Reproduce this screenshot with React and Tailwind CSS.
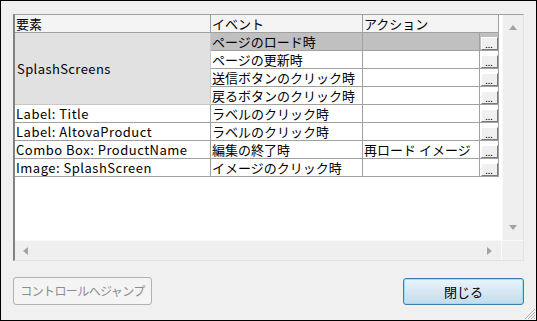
import React from "react";

const FONT = { fontFamily: '"Noto Sans CJK JP", "Liberation Sans", sans-serif' };

const ROWS = [
    { event: "ページのロード時", action: "", selected: true },
    { event: "ページの更新時", action: "" },
    { event: "送信ボタンのクリック時", action: "" },
    { event: "戻るボタンのクリック時", action: "" },
];

const SINGLE = [
    { element: "Label: Title", event: "ラベルのクリック時", action: "" },
    { element: "Label: AltovaProduct", event: "ラベルのクリック時", action: "" },
    { element: "Combo Box: ProductName", event: "編集の終了時", action: "再ロード イメージ" },
    { element: "Image: SplashScreen", event: "イメージのクリック時", action: "" },
];

const cell = "border-r border-b border-[#a0a0a0] px-[1px] text-[13px] leading-[17px] text-black whitespace-nowrap overflow-hidden";

const DotsCell = ({ selected }) => (
    <div className={"flex items-end justify-center border-b border-r border-[#a0a0a0] " + (selected ? "bg-[#c0c0c0]" : "bg-white")}>
        <div className="flex h-[13px] w-[17px] items-end justify-center border border-l-white border-t-white border-r-[#7a7a7a] border-b-[#7a7a7a] bg-[#f0f0f0] text-[9px] leading-[9px] text-black">
            ...
        </div>
    </div>
);

const Tri = ({ dir }) => {
    const pts = {
        up: "0,5 4,0 8,5",
        down: "0,0 8,0 4,5",
        left: "5,0 5,8 0,4",
        right: "0,0 0,8 5,4",
    }[dir];
    const w = dir === "up" || dir === "down" ? 8 : 5;
    const h = dir === "up" || dir === "down" ? 5 : 8;
    return (
        <svg width={w} height={h}>
            <polygon points={pts} fill="#a3a3a3" />
        </svg>
    );
};

export default function App() {
    return (
        <div
            className="relative flex h-[321px] w-[537px] flex-col border border-black bg-[#f0f0f0] pl-[12px] pr-[12px] pt-[13px]"
            style={FONT}
        >
            {/* list */}
            <div className="flex h-[247px] w-[511px] flex-col border-l-2 border-t border-r border-b border-l-[#828282] border-t-[#a0a0a0] border-r-[#e3e3e3] border-b-[#e3e3e3] bg-white">
                <div className="flex h-[225px]">
                    <div className="w-[484px]">
                        <div className="grid grid-cols-[196px_152px_117px_19px] auto-rows-[18px]">
                            <div className={cell + " bg-[#f4f4f4]"}>要素</div>
                            <div className={cell + " bg-[#f4f4f4]"}>イベント</div>
                            <div className={cell + " col-span-2 bg-[#f4f4f4]"}>アクション</div>

                            <div className="row-span-4 flex items-center border-r border-b border-[#c8c8c8] bg-[#e1e1e1] px-[2px] text-[13px] tracking-[0.4px] text-black">
                                SplashScreens
                            </div>
                            {ROWS.map((r, i) => (
                                <React.Fragment key={i}>
                                    <div className={cell + (r.selected ? " bg-[#c0c0c0]" : " bg-white")}>{r.event}</div>
                                    <div className={cell + (r.selected ? " bg-[#c0c0c0]" : " bg-white")}>{r.action}</div>
                                    <DotsCell selected={r.selected} />
                                </React.Fragment>
                            ))}

                            {SINGLE.map((r, i) => (
                                <React.Fragment key={i}>
                                    <div className={cell + " tracking-[0.5px] bg-white"}>{r.element}</div>
                                    <div className={cell + " bg-white"}>{r.event}</div>
                                    <div className={cell + " bg-white"}>{r.action}</div>
                                    <DotsCell />
                                </React.Fragment>
                            ))}
                        </div>
                    </div>
                    <div className="w-[3px]" />
                    {/* vertical scrollbar */}
                    <div className="flex w-[21px] flex-col items-center justify-between border-l border-[#fafafa] bg-[#efefef] pt-[10px] pb-[10px]">
                        <Tri dir="up" />
                        <Tri dir="down" />
                    </div>
                </div>
                {/* horizontal scrollbar */}
                <div className="flex h-[20px] border-t border-[#fafafa]">
                    <div className="flex flex-1 items-center justify-between bg-[#efefef] pl-[8px] pr-[9px]">
                        <Tri dir="left" />
                        <Tri dir="right" />
                    </div>
                    <div className="w-[22px] border-l border-[#fafafa] bg-[#efefef]" />
                </div>
            </div>

            {/* buttons */}
            <div className="mt-[16px] flex items-start justify-between">
                <button
                    disabled
                    className="flex h-[28px] w-[139px] items-center justify-center whitespace-nowrap rounded-[3px] border border-[#adb2b5] bg-[#f4f4f4] px-0 text-[12px] tracking-[-0.6px] text-[#8d8d8d]"
                >
                    コントロールへジャンプ
                </button>
                <button className="mt-[1px] flex h-[27px] w-[121px] items-center justify-center rounded-[3px] border border-[#3c7fb1] bg-gradient-to-b from-[#eaf5fc] to-[#c3dbea] text-[13px] text-black shadow-[inset_0_0_0_1px_#9fdcf7]">
                    閉じる
                </button>
            </div>

            {/* resize grip */}
            <svg width="12" height="12" className="absolute bottom-0 right-0">
                <line x1="11" y1="1" x2="1" y2="11" stroke="#b0b0b0" />
                <line x1="11" y1="4" x2="4" y2="11" stroke="#b0b0b0" />
                <line x1="11" y1="7" x2="7" y2="11" stroke="#b0b0b0" />
                <line x1="11" y1="10" x2="10" y2="11" stroke="#b0b0b0" />
            </svg>
        </div>
    );
}
